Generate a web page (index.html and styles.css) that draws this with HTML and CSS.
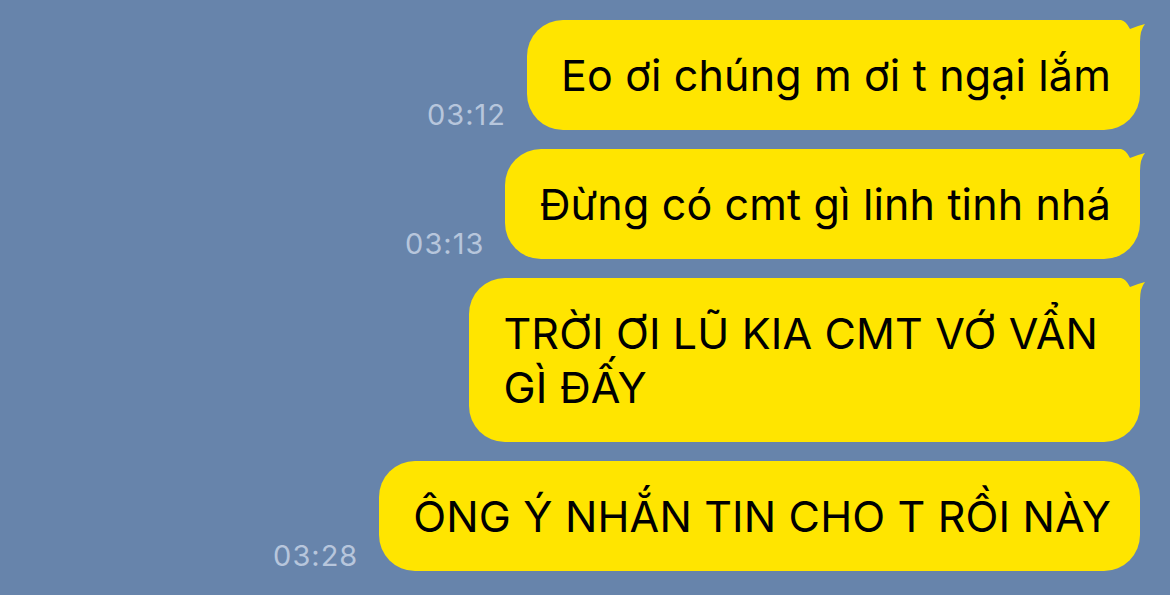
FILE: index.html
```html
<!DOCTYPE html>
<html lang="vi">
  <head>
    <meta charset="UTF-8" />
    <title>Chat</title>
    <link rel="stylesheet" href="styles.css">
  </head>
  <body>
    <div class="chat">
      <div class="row">
        <span class="time">03:12</span>
        <div class="bubble">
          <svg class="tail" width="50" height="60" viewBox="0 0 50 60"><path d="M0 0 L21 0 Q26 1 30 9 Q37 6 45 4 Q40 10 40 22 L40 60 L0 60 Z" fill="#ffe500"/></svg>
          <span class="text">Eo ơi chúng m ơi t ngại lắm</span>
        </div>
      </div>
      <div class="row">
        <span class="time">03:13</span>
        <div class="bubble">
          <svg class="tail" width="50" height="60" viewBox="0 0 50 60"><path d="M0 0 L21 0 Q26 1 30 9 Q37 6 45 4 Q40 10 40 22 L40 60 L0 60 Z" fill="#ffe500"/></svg>
          <span class="text">Đừng có cmt gì linh tinh nhá</span>
        </div>
      </div>
      <div class="row">
        <div class="bubble bubble-wrap">
          <svg class="tail" width="50" height="60" viewBox="0 0 50 60"><path d="M0 0 L21 0 Q26 1 30 9 Q37 6 45 4 Q40 10 40 22 L40 60 L0 60 Z" fill="#ffe500"/></svg>
          <span class="text">TRỜI ƠI LŨ KIA CMT VỚ VẨN<br>GÌ ĐẤY</span>
        </div>
      </div>
      <div class="row">
        <span class="time">03:28</span>
        <div class="bubble"><span class="text">ÔNG Ý NHẮN TIN CHO T RỒI NÀY</span></div>
      </div>
    </div>
  </body>
</html>
```

FILE: styles.css
```css
body {
  margin: 0;
  background-color: #6784ab;
  font-family: 'Inter', 'Roboto', sans-serif;
  overflow: hidden;
}
.chat {
  display: flex;
  flex-direction: column;
  align-items: flex-end;
  gap: 19px;
  padding: 20px 30px 0 0;
}
.row {
  display: flex;
  align-items: flex-end;
  gap: 21px;
}
.time {
  color: #b7c6dc;
  font-size: 29px;
  line-height: 1;
  letter-spacing: 1px;
  margin-bottom: 1px;
}
.bubble {
  position: relative;
  background-color: #ffe500;
  color: #000;
  font-size: 43px;
  letter-spacing: 0.15px;
  line-height: 54px;
  padding: 28px 29px 28px 34px;
  border-radius: 36px;
  white-space: nowrap;
}
.bubble-wrap {
  padding-right: 42px;
}
.text {
  position: relative;
}
.tail {
  position: absolute;
  top: 0;
  right: -10px;
}
```
